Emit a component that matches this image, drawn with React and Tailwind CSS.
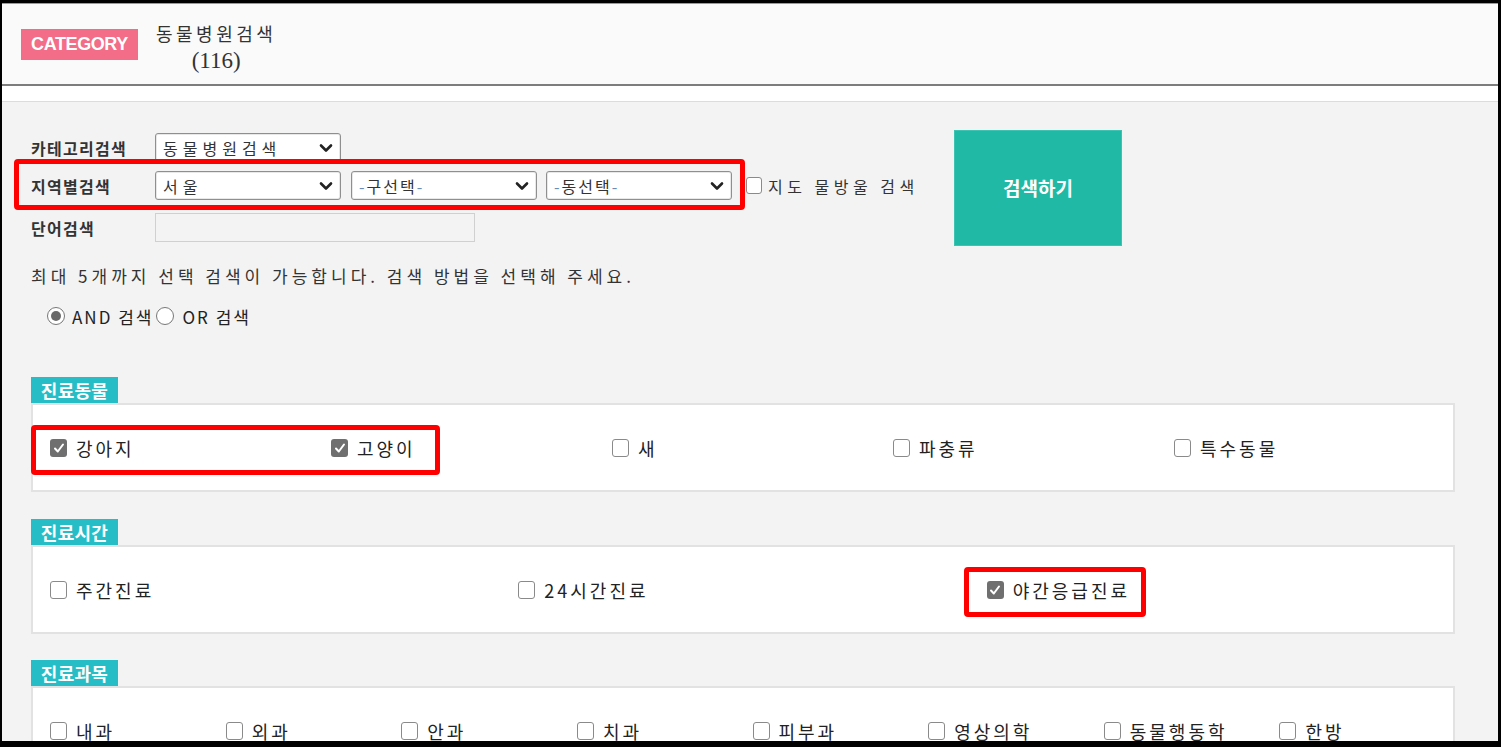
import { useState } from "react";

const KR = { fontFamily: '"Noto Sans CJK KR", "Noto Sans", sans-serif' };

const Chevron = () => (
  <svg width="14" height="10" viewBox="0 0 14 10" className="shrink-0">
    <path d="M2 2.5 L7 7.5 L12 2.5" fill="none" stroke="#222" strokeWidth="2.6" strokeLinecap="round" strokeLinejoin="round" />
  </svg>
);

const SelectBox = ({ value, dashed }) => (
  <div className="flex h-[29px] w-[186px] items-center justify-between rounded-[3px] border border-[#8f8f8f] bg-white pl-[7px] pr-[7px] shadow-[inset_0_0_0_1px_#e8e8e8]">
    {dashed ? (
      <span className="text-[16px] tracking-[2px] text-[#333]">
        <span className="text-[#6a8bb5]">-</span>
        {value}
        <span className="text-[#6a8bb5]">-</span>
      </span>
    ) : (
      <span className="text-[16px] tracking-[5px] text-[#333]">{value}</span>
    )}
    <Chevron />
  </div>
);

const Check = ({ checked }) =>
  checked ? (
    <span className="flex h-[18px] w-[17px] shrink-0 items-center justify-center rounded-[3px] bg-[#6f6f6f]">
      <svg width="12" height="12" viewBox="0 0 12 12">
        <path d="M2 6.5 L4.8 9.5 L10 2.5" fill="none" stroke="#fff" strokeWidth="2" strokeLinecap="round" strokeLinejoin="round" />
      </svg>
    </span>
  ) : (
    <span className="h-[18px] w-[17px] shrink-0 rounded-[3px] border border-[#8a8a8a] bg-white" />
  );

const Item = ({ label, checked, highlight }) => (
  <div className="flex items-center">
    <div className="relative flex items-center gap-[9px]">
      <Check checked={checked} />
      <span className="text-[18px] leading-[26px] tracking-[3px] text-[#222]">{label}</span>
      {highlight && (
        <div className="pointer-events-none absolute -bottom-[14px] -left-[23px] -right-[16px] -top-[10px] rounded-[4px] border-[5px] border-[#ff0000]" />
      )}
    </div>
  </div>
);

const Section = ({ title, cols, items, mt, mark }) => (
  <div className={mt}>
    <div className="flex h-[26px] w-[87px] items-center justify-center bg-[#27bdc6] text-[18px] font-bold tracking-[0.3px] text-white">
      {title}
    </div>
    <div className="relative h-[89px] w-[1424px] border-2 border-[#e2e2e2] bg-white">
      <div className={`grid h-full w-[1405px] items-center ${cols}`} style={{ marginLeft: 17 }}>
        {items.map((it) => (
          <Item key={it.label} {...it} />
        ))}
      </div>
      {mark && (
        <div className="pointer-events-none absolute -left-[2px] top-[20px] h-[50px] w-[409px] rounded-[4px] border-[5px] border-[#ff0000]" />
      )}
    </div>
  </div>
);

export default function App() {
  const [mode] = useState("and");

  const animals = [
    { label: "강아지", checked: true },
    { label: "고양이", checked: true },
    { label: "새" },
    { label: "파충류" },
    { label: "특수동물" },
  ];
  const times = [
    { label: "주간진료" },
    { label: "24시간진료" },
    { label: "야간응급진료", checked: true, highlight: true },
  ];
  const subjects = ["내과", "외과", "안과", "치과", "피부과", "영상의학", "동물행동학", "한방"].map((l) => ({ label: l }));

  return (
    <div className="box-border h-[747px] w-[1501px] overflow-hidden border-b-[6px] border-l-[2px] border-r-[3px] border-t-[3px] border-black bg-[#f3f3f3]" style={KR}>
      {/* header */}
      <div className="flex h-[83px] items-center border-b-2 border-t border-b-[#7d7d7d] border-t-[#9a9a9a] bg-[#fafafa] pl-[19px]">
        <div className="flex h-[31px] w-[117px] items-center justify-center bg-[#f36c88] text-[18px] font-bold tracking-[-0.4px] text-white" style={{ fontFamily: '"Liberation Sans", Arial, sans-serif' }}>
          CATEGORY
        </div>
        <div className="ml-[18px] mt-[6px] flex flex-col items-center leading-[27px] text-[#333]">
          <span className="text-[18px] tracking-[3.5px]">동물병원검색</span>
          <span className="text-[23px]" style={{ fontFamily: '"Liberation Serif", serif' }}>(116)</span>
        </div>
      </div>
      <div className="h-[16px] border-b border-[#dcdcdc] bg-white" />

      {/* search form */}
      <div className="pl-[29px] pt-[28px]">
        <div className="flex">
          <div className="mt-[3px] w-[923px]">
            <div className="flex h-[29px] items-center">
              <span className="w-[124px] text-[16px] font-bold tracking-[1.3px] text-[#333]">카테고리검색</span>
              <SelectBox value="동물병원검색" />
            </div>
            <div className="mt-[9px] flex h-[29px] items-center">
              <div className="relative flex items-center">
                <span className="w-[124px] text-[16px] font-bold tracking-[1.3px] text-[#333]">지역별검색</span>
                <SelectBox value="서울" />
                <div className="ml-[10px]">
                  <SelectBox value="구선택" dashed />
                </div>
                <div className="ml-[9px]">
                  <SelectBox value="동선택" dashed />
                </div>
                <div className="pointer-events-none absolute -bottom-[10px] -left-[17px] -right-[13px] -top-[12px] rounded-[4px] border-[5px] border-[#ff0000]" />
              </div>
              <div className="ml-[14px] flex items-center gap-[6px]">
                <span className="h-[17px] w-[16px] rounded-[3px] border border-[#8a8a8a] bg-white" />
                <span className="text-[16px] tracking-[4.5px] text-[#333]">지도 물방울 검색</span>
              </div>
            </div>
            <div className="mt-[13px] flex h-[29px] items-center">
              <span className="w-[124px] text-[16px] font-bold tracking-[1.3px] text-[#333]">단어검색</span>
              <div className="h-[29px] w-[320px] border border-[#d0d0d0] bg-[#f3f3f3]" />
            </div>
          </div>
          <button className="flex h-[116px] w-[168px] items-center justify-center border border-[#3cc4b2] bg-[#20b9a5] text-[19px] font-bold text-white">
            검색하기
          </button>
        </div>

        <p className="mt-[17px] text-[17px] tracking-[4px] text-[#333]">
          최대 5개까지 선택 검색이 가능합니다. 검색 방법을 선택해 주세요.
        </p>

        <div className="mt-[15px] flex items-center pl-[16px] text-[17px] tracking-[2px] text-[#222]">
          <span className="flex h-[18px] w-[18px] items-center justify-center rounded-full border border-[#777] bg-white">
            {mode === "and" && <span className="h-[10px] w-[10px] rounded-full bg-[#6a6a6a]" />}
          </span>
          <span className="ml-[7px]">AND 검색</span>
          <span className="ml-[3px] h-[18px] w-[18px] rounded-full border border-[#777] bg-white" />
          <span className="ml-[8px]">OR 검색</span>
        </div>

        {/* filter sections */}
        <Section title="진료동물" cols="grid-cols-5" items={animals} mt="mt-[48px]" mark />
        <Section title="진료시간" cols="grid-cols-3" items={times} mt="mt-[27px]" />
        <Section title="진료과목" cols="grid-cols-8" items={subjects} mt="mt-[26px]" />
      </div>
    </div>
  );
}
